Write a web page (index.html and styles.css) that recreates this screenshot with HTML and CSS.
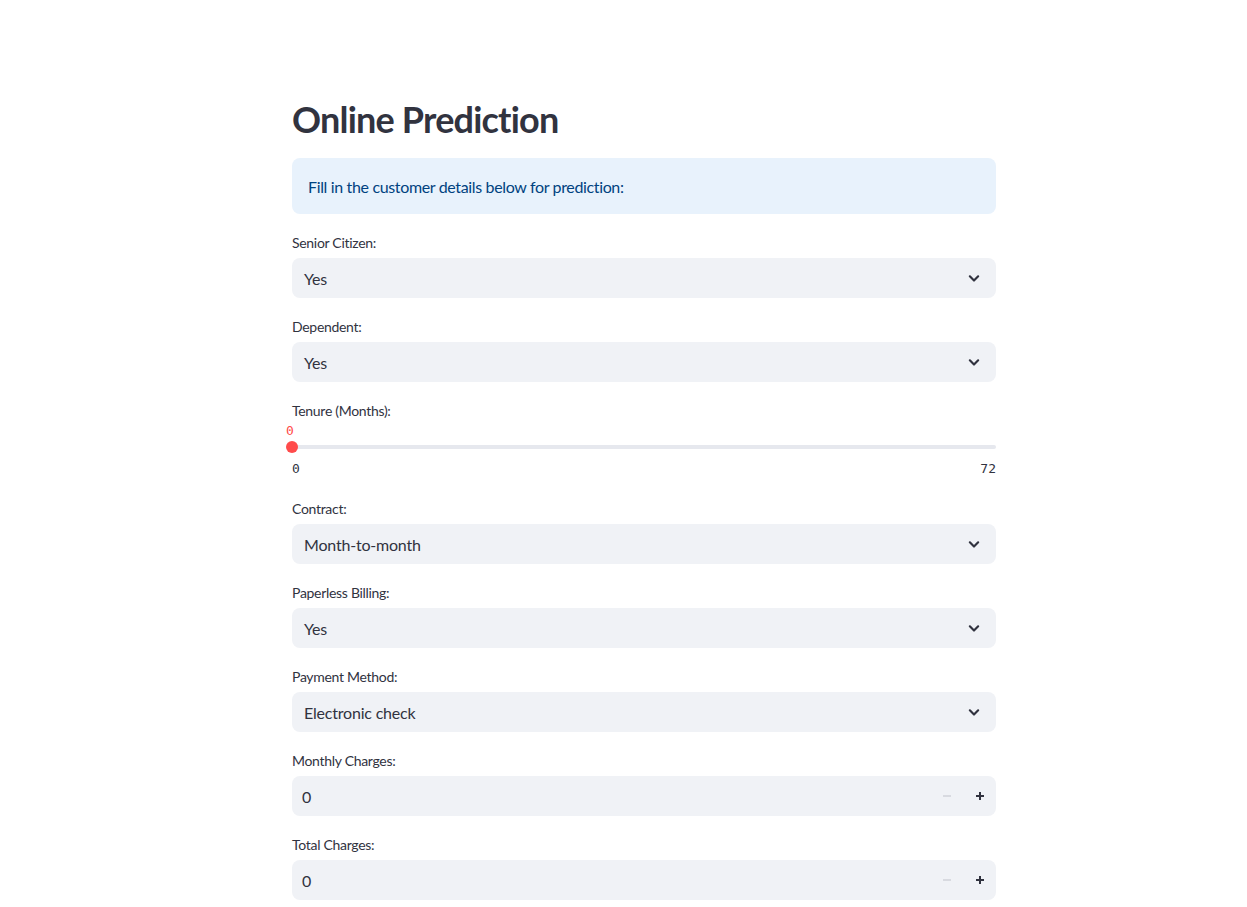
FILE: index.html
```html
<!DOCTYPE html>
<html lang="en">
<head>
<meta charset="utf-8">
<title>Online Prediction</title>
<link rel="stylesheet" href="styles.css">
</head>
<body>
<main class="main">
  <h1 class="title">Online Prediction</h1>
  <div class="info">Fill in the customer details below for prediction:</div>

  <div class="field">
    <label class="label">Senior Citizen:</label>
    <div class="select"><span>Yes</span><svg class="chev" viewBox="0 0 24 24" width="20" height="20"><path d="M7 10l5 5 5-5" fill="none" stroke="#31333f" stroke-width="2.6" stroke-linecap="round" stroke-linejoin="round"/></svg></div>
  </div>

  <div class="field">
    <label class="label">Dependent:</label>
    <div class="select"><span>Yes</span><svg class="chev" viewBox="0 0 24 24" width="20" height="20"><path d="M7 10l5 5 5-5" fill="none" stroke="#31333f" stroke-width="2.6" stroke-linecap="round" stroke-linejoin="round"/></svg></div>
  </div>

  <div class="field">
    <label class="label">Tenure (Months):</label>
    <div class="slider">
      <div class="slider-value">0</div>
      <div class="slider-track"><div class="thumb"></div></div>
      <div class="slider-ticks"><span>0</span><span>72</span></div>
    </div>
  </div>

  <div class="field">
    <label class="label">Contract:</label>
    <div class="select"><span>Month-to-month</span><svg class="chev" viewBox="0 0 24 24" width="20" height="20"><path d="M7 10l5 5 5-5" fill="none" stroke="#31333f" stroke-width="2.6" stroke-linecap="round" stroke-linejoin="round"/></svg></div>
  </div>

  <div class="field">
    <label class="label">Paperless Billing:</label>
    <div class="select"><span>Yes</span><svg class="chev" viewBox="0 0 24 24" width="20" height="20"><path d="M7 10l5 5 5-5" fill="none" stroke="#31333f" stroke-width="2.6" stroke-linecap="round" stroke-linejoin="round"/></svg></div>
  </div>

  <div class="field">
    <label class="label">Payment Method:</label>
    <div class="select"><span>Electronic check</span><svg class="chev" viewBox="0 0 24 24" width="20" height="20"><path d="M7 10l5 5 5-5" fill="none" stroke="#31333f" stroke-width="2.6" stroke-linecap="round" stroke-linejoin="round"/></svg></div>
  </div>

  <div class="field">
    <label class="label">Monthly Charges:</label>
    <div class="number"><span class="num-val">0</span>
      <span class="btn minus"><svg viewBox="0 0 12 12" width="12" height="12"><path d="M2 6h8" stroke="#d5d7de" stroke-width="1.8"/></svg></span>
      <span class="btn plus"><svg viewBox="0 0 12 12" width="12" height="12"><path d="M2 6h8M6 2v8" stroke="#31333f" stroke-width="2"/></svg></span>
    </div>
  </div>

  <div class="field">
    <label class="label">Total Charges:</label>
    <div class="number"><span class="num-val">0</span>
      <span class="btn minus"><svg viewBox="0 0 12 12" width="12" height="12"><path d="M2 6h8" stroke="#d5d7de" stroke-width="1.8"/></svg></span>
      <span class="btn plus"><svg viewBox="0 0 12 12" width="12" height="12"><path d="M2 6h8M6 2v8" stroke="#31333f" stroke-width="2"/></svg></span>
    </div>
  </div>
</main>
</body>
</html>
```

FILE: styles.css
```css
html, body {
  margin: 0;
  padding: 0;
  background: #ffffff;
  overflow: hidden;
}
body {
  font-family: Lato, "Noto Sans", sans-serif;
  color: #31333f;
}
.main {
  width: 704px;
  margin-left: 292px;
  padding-top: 96px;
  display: flex;
  flex-direction: column;
  gap: 16px;
}
.title {
  margin: 0;
  font-size: 36px;
  font-weight: 700;
  line-height: 46px;
  letter-spacing: -0.8px;
}
.info {
  background: #e8f2fc;
  color: #004280;
  border-radius: 8px;
  height: 56px;
  padding: 0 16px;
  display: flex;
  align-items: center;
  font-size: 16px;
  letter-spacing: -0.35px;
}
.field {
  display: flex;
  flex-direction: column;
}
.label {
  height: 24px;
  margin-bottom: 4px;
  display: flex;
  align-items: center;
  font-size: 14px;
  letter-spacing: -0.3px;
}
.select {
  height: 40px;
  background: #f0f2f6;
  border-radius: 8px;
  display: flex;
  align-items: center;
  justify-content: space-between;
  padding: 0 12px 0 12px;
  font-size: 16px;
  letter-spacing: -0.2px;
}
.chev { display: block; }
.slider {
  height: 54px;
  display: flex;
  flex-direction: column;
}
.slider-value {
  height: 11px;
  line-height: 9px;
  font-family: "DejaVu Sans Mono", monospace;
  font-size: 13px;
  color: #ff4b4b;
  margin-left: -6px;
}
.slider-track {
  height: 20px;
  display: flex;
  align-items: center;
  position: relative;
}
.slider-track::before {
  content: "";
  display: block;
  width: 100%;
  height: 4px;
  border-radius: 2px;
  background: #e6e8ee;
}
.thumb {
  position: absolute;
  left: -6px;
  top: 4px;
  width: 12px;
  height: 12px;
  border-radius: 50%;
  background: #ff4b4b;
}
.slider-ticks {
  height: 23px;
  display: flex;
  align-items: center;
  justify-content: space-between;
  font-family: "DejaVu Sans Mono", monospace;
  font-size: 13px;
  color: #31333f;
}
.number {
  height: 40px;
  background: #f0f2f6;
  border-radius: 8px;
  display: flex;
  align-items: center;
  padding-left: 10px;
  font-size: 16px;
}
.num-val { flex: 1; }
.btn {
  width: 33px;
  height: 40px;
  display: flex;
  align-items: center;
  justify-content: center;
}
.btn svg { display: block; }
```
